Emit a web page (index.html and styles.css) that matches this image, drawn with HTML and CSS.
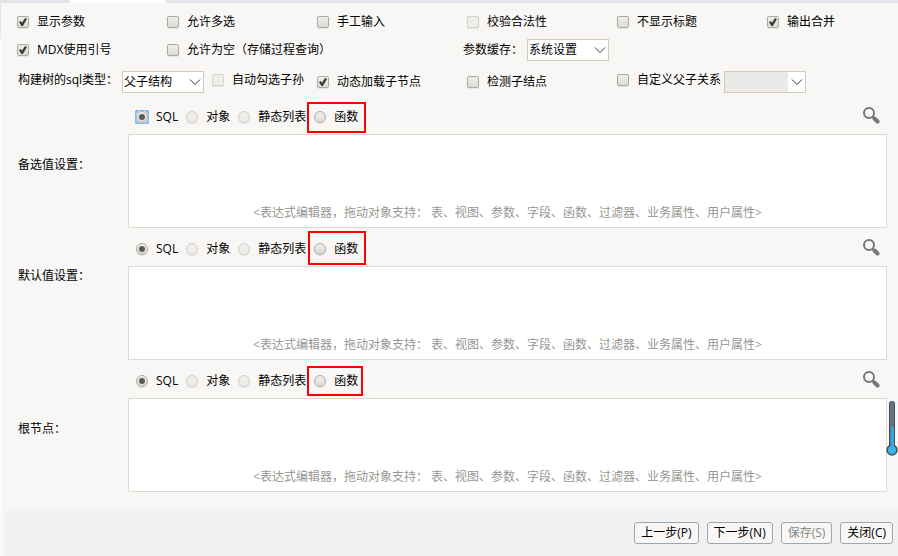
FILE: index.html
```html
<!DOCTYPE html>
<html lang="zh-CN">
<head>
  <meta charset="UTF-8">
  <meta name="viewport" content="width=device-width, initial-scale=1.0">
  <title>参数设置</title>
  <link rel="stylesheet" href="styles.css">
</head>
<body>

  <div class="tabs"><div class="tab-active"></div></div>

  <form class="panel">
    <section class="options">
      <label class="check"><input type="checkbox" checked>显示参数</label>
      <label class="check"><input type="checkbox">允许多选</label>
      <label class="check"><input type="checkbox">手工输入</label>
      <label class="check"><input type="checkbox" disabled>校验合法性</label>
      <label class="check"><input type="checkbox">不显示标题</label>
      <label class="check"><input type="checkbox" checked>输出合并</label>

      <label class="check"><input type="checkbox" checked>MDX使用引号</label>
      <label class="check wide"><input type="checkbox">允许为空（存储过程查询）</label>
      <div class="field cache">
        <label for="cache">参数缓存：</label>
        <span class="select">
          <select id="cache"><option>系统设置</option></select>
          <svg viewBox="0 0 12 8"><path d="M1 1.5 L6 6.5 L11 1.5"/></svg>
        </span>
      </div>

      <div class="field wide">
        <label class="tree-label" for="tree">构建树的sql类型：</label>
        <span class="select">
          <select id="tree"><option>父子结构</option></select>
          <svg viewBox="0 0 12 8"><path d="M1 1.5 L6 6.5 L11 1.5"/></svg>
        </span>
        <label class="check"><input type="checkbox" disabled>自动勾选子孙</label>
      </div>
      <label class="check"><input type="checkbox" checked>动态加载子节点</label>
      <label class="check"><input type="checkbox">检测子结点</label>
      <div class="field relation wide">
        <label class="check"><input type="checkbox">自定义父子关系</label>
        <span class="select">
          <select aria-label="自定义父子关系" disabled><option></option></select>
          <svg viewBox="0 0 12 8"><path d="M1 1.5 L6 6.5 L11 1.5"/></svg>
        </span>
      </div>
    </section>

    <section class="setting">
      <label class="name" for="candidate">备选值设置：</label>
      <div class="editor">
        <div class="toolbar">
          <label class="radio focused"><input type="radio" name="candidate" checked>SQL</label>
          <label class="radio"><input type="radio" name="candidate" disabled>对象</label>
          <label class="radio"><input type="radio" name="candidate" disabled>静态列表</label>
          <label class="radio marked"><input type="radio" name="candidate">函数</label>
          <button type="button" class="search" aria-label="搜索">
            <svg viewBox="0 0 18 18"><circle cx="7" cy="7" r="5"/><path d="M10.5 10.5 L12.5 12.5"/><path class="handle" d="M12.5 12.5 L15.5 15.5"/></svg>
          </button>
        </div>
        <textarea id="candidate" placeholder="&lt;表达式编辑器，拖动对象支持： 表、视图、参数、字段、函数、过滤器、业务属性、用户属性&gt;"></textarea>
      </div>
    </section>

    <section class="setting setting-default">
      <label class="name" for="default">默认值设置：</label>
      <div class="editor">
        <div class="toolbar">
          <label class="radio"><input type="radio" name="default" checked>SQL</label>
          <label class="radio"><input type="radio" name="default" disabled>对象</label>
          <label class="radio"><input type="radio" name="default" disabled>静态列表</label>
          <label class="radio marked"><input type="radio" name="default">函数</label>
          <button type="button" class="search" aria-label="搜索">
            <svg viewBox="0 0 18 18"><circle cx="7" cy="7" r="5"/><path d="M10.5 10.5 L12.5 12.5"/><path class="handle" d="M12.5 12.5 L15.5 15.5"/></svg>
          </button>
        </div>
        <textarea id="default" placeholder="&lt;表达式编辑器，拖动对象支持： 表、视图、参数、字段、函数、过滤器、业务属性、用户属性&gt;"></textarea>
      </div>
    </section>

    <section class="setting setting-root">
      <label class="name" for="root">根节点：</label>
      <div class="editor">
        <div class="toolbar">
          <label class="radio"><input type="radio" name="root" checked>SQL</label>
          <label class="radio"><input type="radio" name="root" disabled>对象</label>
          <label class="radio"><input type="radio" name="root" disabled>静态列表</label>
          <label class="radio marked"><input type="radio" name="root">函数</label>
          <button type="button" class="search" aria-label="搜索">
            <svg viewBox="0 0 18 18"><circle cx="7" cy="7" r="5"/><path d="M10.5 10.5 L12.5 12.5"/><path class="handle" d="M12.5 12.5 L15.5 15.5"/></svg>
          </button>
        </div>
        <textarea id="root" placeholder="&lt;表达式编辑器，拖动对象支持： 表、视图、参数、字段、函数、过滤器、业务属性、用户属性&gt;"></textarea>
      </div>
      <svg class="thermometer" viewBox="0 0 12 56">
        <rect x="3.5" y="1.5" width="5" height="47" rx="2" fill="#66747f" stroke="#44525e"/>
        <circle cx="6" cy="50" r="5" fill="#36b5e6" stroke="#44525e" stroke-width="1.5"/>
        <rect x="5" y="27" width="3" height="20" fill="#2fa8e4"/>
      </svg>
    </section>

    <footer class="actions">
      <button type="button">上一步(P)</button>
      <button type="button">下一步(N)</button>
      <button type="button" disabled>保存(S)</button>
      <button type="button">关闭(C)</button>
    </footer>
  </form>

</body>
</html>
```

FILE: styles.css
```css
* {
  box-sizing: border-box;
}
body {
  margin: 0;
  min-height: 100vh;
  display: flex;
  flex-direction: column;
  background-color: #f8f7f5;
  font-family: "Open Sans", "Noto Sans CJK SC", sans-serif;
  font-size: 12px;
  line-height: 18px;
  color: #000;
}
.tabs {
  height: 3px;
  padding-left: 70px;
  background-color: #e4e3e9;
}
.tab-active {
  width: 96px;
  height: 3px;
  background-color: #fff;
}
.panel {
  flex: 1;
  display: flex;
  flex-direction: column;
  padding-top: 5px;
  background: linear-gradient(#dce6f5, #dce6f5) 0 0 / 1px 36px no-repeat,
    linear-gradient(#fff, #fff) 0 0 / 1px 100% no-repeat;
}
button, select, textarea {
  font: inherit;
  color: inherit;
}
label {
  white-space: nowrap;
}

/* checkbox area */
.options {
  display: grid;
  grid-template-columns: repeat(5, 150px) 1fr;
  grid-template-rows: 28px 28px 36px;
  align-items: center;
  padding-left: 17px;
}
.wide {
  grid-column: span 2;
}
.check, .radio {
  display: flex;
  align-items: center;
  gap: 8px;
}
.field {
  display: flex;
  align-items: flex-start;
}
.cache {
  grid-column: span 3;
  align-items: center;
  margin-left: -4px;
  gap: 4px;
}
.tree-label {
  width: 105px;
  padding-left: 1px;
}
.field .select + .check {
  margin-left: 8px;
}
.relation {
  gap: 3px;
}

input {
  appearance: none;
  flex: none;
  position: relative;
  width: 12px;
  height: 12px;
  margin: 0;
  border: 1px solid #aaa9a3;
  background: linear-gradient(#efeeea, #dcdbd6);
  box-shadow: 0 1px 1px #e4e3df;
}
input[type="checkbox"] {
  border-radius: 2px;
}
input[type="radio"] {
  border-radius: 50%;
}
input:disabled {
  border-color: #d2d1ce;
  background: #eeedea;
}
input[type="checkbox"]:checked::before {
  content: "";
  position: absolute;
  inset: 1px;
  background-color: #3a3a3a;
  clip-path: polygon(0 50%, 22% 38%, 38% 58%, 75% 0, 100% 12%, 48% 100%, 30% 100%);
}
input[type="radio"]:checked::before {
  content: "";
  position: absolute;
  inset: 2px;
  border-radius: 50%;
  background-color: #5c5a56;
}
.focused input::after {
  content: "";
  position: absolute;
  inset: -2px;
  border: 1px solid #7fbcf5;
  border-radius: 1px;
  background: radial-gradient(circle, transparent 6px, #7fbcf5 7px);
}

.select {
  position: relative;
  flex: none;
  width: 82px;
}
select {
  appearance: none;
  display: block;
  width: 100%;
  height: 22px;
  padding: 0 18px 0 1px;
  border: 1px solid #d2cbb9;
  border-radius: 0;
  background-color: #fff;
}
select:disabled {
  opacity: 1;
  background: linear-gradient(#ebeae9, #ebeae9) 0 0 / calc(100% - 17px) 100% no-repeat #fff;
}
.select svg {
  position: absolute;
  top: 7px;
  right: 3px;
  width: 12px;
  height: 8px;
  fill: none;
  stroke: #333;
  pointer-events: none;
}

/* value settings */
.setting {
  position: relative;
  display: flex;
  align-items: flex-start;
  padding: 0 11px 4px 18px;
}
.name {
  width: 110px;
  padding-top: 56px;
}
.setting-default .name {
  padding-top: 35px;
}
.editor {
  flex: 1;
}
.toolbar {
  display: flex;
  align-items: center;
  gap: 8px;
  height: 34px;
  padding: 0 7px 0 8px;
}
.marked {
  position: relative;
}
.marked::after {
  content: "";
  position: absolute;
  inset: -6px -8px -7px -7px;
  border: 2px solid #f00;
}
.setting-default .marked::after {
  inset: -9px -8px -7px -6px;
}
.setting-root .marked::after {
  inset: -6px -5px -6px -7px;
}
.search {
  width: 18px;
  height: 18px;
  margin: 0 0 4px auto;
  padding: 0;
  border: 0;
  background: none;
}
.search svg {
  display: block;
  fill: none;
  stroke: #777674;
  stroke-width: 2;
}
.search .handle {
  stroke-width: 4;
  stroke-linecap: round;
}
textarea {
  display: block;
  width: 100%;
  height: 94px;
  padding: 69px 8px 0;
  border: 1px solid #dfd9cf;
  border-radius: 0;
  background-color: #fff;
  text-align: center;
  resize: none;
  overflow: hidden;
}
textarea::placeholder {
  color: #989692;
}
.thermometer {
  position: absolute;
  top: 36px;
  right: 0;
  width: 12px;
  height: 56px;
}

.actions {
  flex: 1;
  display: flex;
  align-items: flex-start;
  justify-content: flex-end;
  gap: 8px;
  margin: 15px 0 0 5px;
  padding: 11px 5px;
  background-color: #f2f1f0;
}
.actions button {
  height: 22px;
  padding: 0 6px;
  line-height: 20px;
  border: 1px solid #9aa8b5;
  border-radius: 3px;
  background-color: #f8f7f6;
}
.actions button:disabled {
  color: #888683;
}
```
